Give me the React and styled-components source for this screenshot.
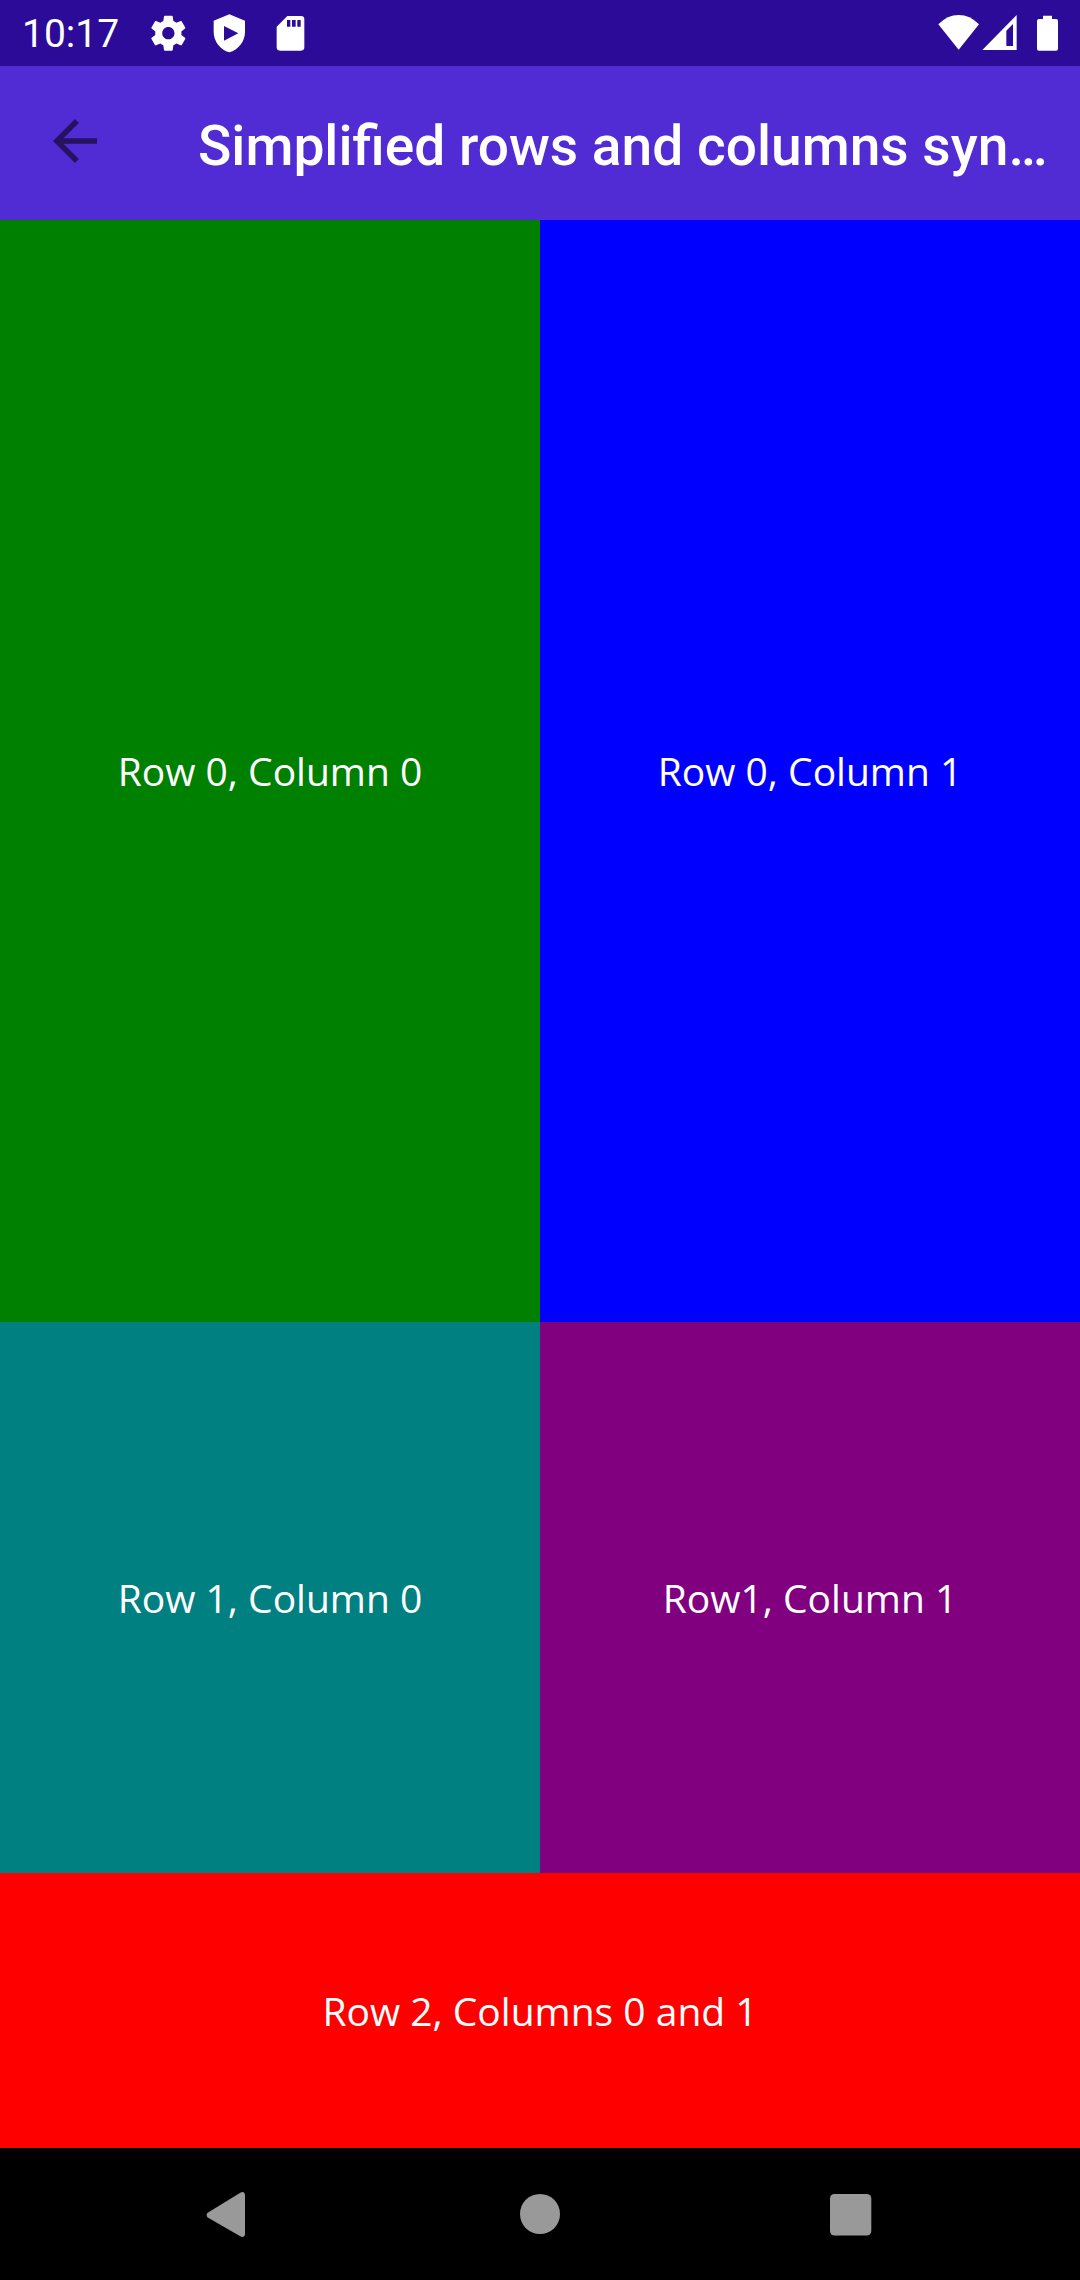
import React from "react";
import styled, { createGlobalStyle } from "styled-components";

const GlobalStyle = createGlobalStyle`
  *, *::before, *::after { box-sizing: border-box; }
  html, body { margin: 0; padding: 0; background: #000; }
  svg { display: block; flex: none; }
`;

const Screen = styled.div`
  display: flex;
  flex-direction: column;
  width: 1080px;
  height: 2280px;
  overflow: hidden;
`;

const StatusBar = styled.header`
  display: flex;
  justify-content: space-between;
  flex: none;
  height: 66px;
  padding: 0 22px 0 22px;
  background: #2b0b98;
  color: #fff;
`;

const StatusGroup = styled.div`
  display: flex;
  align-items: flex-start;
`;

const Clock = styled.span`
  width: 125px;
  font: 400 39px/69px Roboto, sans-serif;
  white-space: nowrap;
`;

const StatusIcon = styled.svg`
  width: ${(p) => p.$w}px;
  height: 66px;
  margin-left: ${(p) => p.$gap || 0}px;
  fill: #fff;
`;

const AppBar = styled.div`
  display: flex;
  align-items: flex-start;
  flex: none;
  height: 154px;
  padding: 0 30px 0 42px;
  background: #512bd4;
`;

const BackButton = styled.button`
  flex: none;
  width: 156px;
  height: 66px;
  margin-top: 42px;
  padding: 0;
  border: 0;
  background: none;
  color: #26125f;
`;

const Title = styled.h1`
  flex: 1;
  min-width: 0;
  margin: 47px 0 0;
  color: #fff;
  font: 500 55.1px/66px Roboto, sans-serif;
  white-space: nowrap;
`;

const ColorGrid = styled.main`
  display: grid;
  flex: none;
  height: 1928px;
  grid-template-columns: 1fr 1fr;
  grid-template-rows: 1102px 551px 275px;
`;

const Cell = styled.div`
  display: flex;
  align-items: center;
  justify-content: center;
  grid-column: span ${(p) => p.$span || 1};
  background: ${(p) => p.$color};
  color: #fff;
  font: 400 39px/52px "Open Sans", sans-serif;
`;

const NavBar = styled.nav`
  display: flex;
  align-items: center;
  justify-content: space-between;
  flex: none;
  height: 132px;
  padding: 0 196px 0 192px;
  background: #000;
`;

const NavIcon = styled.svg`
  width: 66px;
  height: 66px;
  fill: #999;
`;

const cells = [
  { text: "Row 0, Column 0", color: "#008000" },
  { text: "Row 0, Column 1", color: "#0000ff" },
  { text: "Row 1, Column 0", color: "#008080" },
  { text: "Row1, Column 1", color: "#800080" },
  { text: "Row 2, Columns 0 and 1", color: "#ff0000", span: 2 },
];

export default function App() {
  return (
    <>
      <GlobalStyle />
      <Screen>
        <StatusBar>
          <StatusGroup>
            <Clock>10:17</Clock>
            <StatusIcon $w={42} viewBox="-0.2 -6.95 24 37.71">
              <path d="M19.43 12.98c.04-.32.07-.64.07-.98s-.03-.66-.07-.98l2.11-1.65c.19-.15.24-.42.12-.64l-2-3.46c-.12-.22-.39-.3-.61-.22l-2.49 1c-.52-.4-1.08-.73-1.69-.98l-.38-2.65C14.46 2.18 14.25 2 14 2h-4c-.25 0-.46.18-.49.42l-.38 2.65c-.61.25-1.17.59-1.69.98l-2.49-1c-.23-.09-.49 0-.61.22l-2 3.46c-.13.22-.07.49.12.64l2.11 1.65c-.04.32-.07.65-.07.98s.03.66.07.98l-2.11 1.65c-.19.15-.24.42-.12.64l2 3.46c.12.22.39.3.61.22l2.49-1c.52.4 1.08.73 1.69.98l.38 2.65c.03.24.24.42.49.42h4c.25 0 .46-.18.49-.42l.38-2.65c.61-.25 1.17-.59 1.69-.98l2.49 1c.23.09.49 0 .61-.22l2-3.46c.12-.22.07-.49-.12-.64l-2.11-1.65zM12 15.5c-1.93 0-3.5-1.57-3.5-3.5s1.57-3.5 3.5-3.5 3.5 1.57 3.5 3.5-1.57 3.5-3.5 3.5z" />
            </StatusIcon>
            <StatusIcon $w={32} $gap={24} viewBox="639 0 96 198">
              <path fillRule="evenodd" d="M688 43L735 62V96C735 124 715 150 688 157C661 150 641 124 641 96V62ZM672 78V122L715 100Z" />
            </StatusIcon>
            <StatusIcon $w={30} $gap={31} viewBox="828 0 90 198">
              <path fillRule="evenodd" d="M862 48H903Q913 48 913 58V142Q913 152 903 152H840Q830 152 830 142V80ZM861 60V80H871V60ZM876 60V80H887V60ZM892 60V80H902V60Z" />
            </StatusIcon>
          </StatusGroup>
          <StatusGroup>
            <StatusIcon $w={42} viewBox="114 0 126 198">
              <path d="M115 73Q142 45 176 45Q210 45 237 73L176 149Z" />
            </StatusIcon>
            <StatusIcon $w={36} $gap={2} viewBox="246 0 108 198">
              <path fillRule="evenodd" d="M247 150L350 45V150ZM319 92V138H339V72Z" />
            </StatusIcon>
            <StatusIcon $w={22} $gap={18} viewBox="408 0 66 198">
              <path d="M429 47H456V57H468Q474 57 474 63V146Q474 152 468 152H417Q411 152 411 146V63Q411 57 417 57H429Z" />
            </StatusIcon>
          </StatusGroup>
        </StatusBar>

        <AppBar>
          <BackButton aria-label="Back">
            <svg width="66" height="66" viewBox="0 0 24 24" fill="currentColor">
              <path d="M20 11H7.83l5.59-5.59L12 4l-8 8 8 8 1.41-1.41L7.83 13H20v-2z" />
            </svg>
          </BackButton>
          <Title>Simplified rows and columns syn…</Title>
        </AppBar>

        <ColorGrid>
          {cells.map((c) => (
            <Cell key={c.text} $color={c.color} $span={c.span}>
              {c.text}
            </Cell>
          ))}
        </ColorGrid>

        <NavBar>
          <NavIcon viewBox="0 0 66 66">
            <path d="M15.7 31.8L48.7 11.5Q52.5 10 53 14V53Q52.5 57 48.7 55.5L15.7 36.5Q13.5 34 15.7 31.8Z" />
          </NavIcon>
          <NavIcon viewBox="0 0 66 66">
            <circle cx="35" cy="33" r="20" />
          </NavIcon>
          <NavIcon viewBox="0 0 66 66">
            <rect x="12" y="13" width="41.3" height="41.5" rx="4.5" />
          </NavIcon>
        </NavBar>
      </Screen>
    </>
  );
}
